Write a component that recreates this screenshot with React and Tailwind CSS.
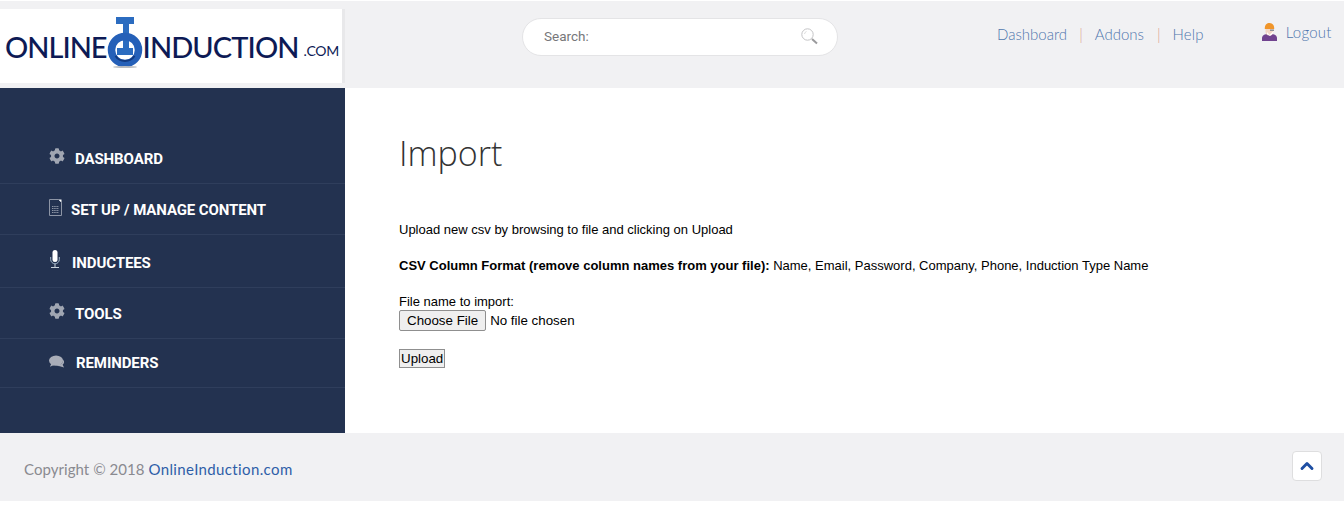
import { FaCog } from 'react-icons/fa'
import { ChevronUp } from 'lucide-react'

function FileIcon() {
  return (
    <svg width="13" height="17" viewBox="0 0 13 17" fill="none" className="text-[#8d95a5]">
      <path d="M.5.5h9l3 3v13H.5z" stroke="currentColor" strokeWidth="1" />
      <path d="M9.5.5h3v3z" fill="#fff" />
      <path d="M3 7.500h7M3 9.500h7M3 11.500h7M3 13.500h7" stroke="currentColor" strokeWidth="1" strokeDasharray="1.500 .7" />
    </svg>
  )
}

function MicIcon() {
  return (
    <svg width="10" height="18" viewBox="0 0 10 18" fill="none">
      <rect x="2.500" y="0" width="5" height="12" rx="2.500" fill="#fff" />
      <path d="M.7 7v2.500a4.300 4.300 0 0 0 8.600 0V7" stroke="#9fb4c8" strokeWidth="1" />
      <path d="M5 14v3M1 17.500h8" stroke="#c9d3dd" strokeWidth="1" />
    </svg>
  )
}

function ChatIcon() {
  return (
    <svg width="17" height="13" viewBox="0 0 17 13">
      <ellipse cx="7.500" cy="5.500" rx="7.500" ry="5.500" fill="#a9adb8" />
      <path d="M2.500 8.500L1 12l5-2z" fill="#a9adb8" />
      <path d="M15 4.500c1.500 2 1.500 4-.5 5.500l1.500 3-4.500-1.500c-1.500 0-2.500-.2-3.500-.7 4 0 7.500-2.800 7-6.300z" fill="#a9adb8" />
    </svg>
  )
}

function SearchIcon() {
  return (
    <svg width="17" height="17" viewBox="0 0 17 17" fill="none">
      <circle cx="6.500" cy="6.500" r="5.700" stroke="#c4c4c6" strokeWidth="1" />
      <path d="M3.500 6a3 3 0 0 1 2-2.500" stroke="#dcdcdd" strokeWidth="1" />
      <path d="M11 11l5 4.500" stroke="#9b9b9d" strokeWidth="2" />
    </svg>
  )
}

function UserIcon() {
  return (
    <svg width="15" height="18" viewBox="0 0 15 18">
      <path d="M0 18v-3c0-2.500 2.500-3.500 4.500-4h6c2 .5 4.500 1.500 4.500 4v3z" fill="#71438f" />
      <path d="M3.500 5h8v3.500a4 4 0 0 1-8 0z" fill="#f3d7c6" />
      <path d="M5 9l2.500 3L12 7.500l-1 3-3 2.500-3-2z" fill="#fff" />
      <path d="M8 6.500h4v1.500H8z" fill="#8c8f98" />
      <path d="M2.800 6C2.500 2 4.800 0 7.500 0s5 2 4.700 6z" fill="#f0952a" />
    </svg>
  )
}

function LogoMark() {
  return (
    <svg width="36" height="51" viewBox="0 0 36 51" className="shrink-0 mb-[7px]">
      <path d="M9 0h18v7h-5v24h4v7H10v-7h6V7H9z" fill="#2b6cc0" />
      <circle cx="18" cy="33" r="13.500" fill="none" stroke="#2560b8" strokeWidth="7.500" />
      <path d="M8.500 39a11.500 11.500 0 0 0 19 0" fill="none" stroke="#123a80" strokeWidth="2" />
      <ellipse cx="18" cy="50" rx="12" ry="1" fill="#b9bcc0" />
    </svg>
  )
}

function SideItem({ icon, label, gap, iconClass = 'justify-center', className }) {
  return (
    <a href="#" className={`flex items-center pl-[49px] border-b border-[#2f3e5c] text-white font-bold text-[15px] tracking-[-0.1px] ${className}`}>
      <span className={`w-4 flex mt-[-4px] ${iconClass}`}>{icon}</span>
      <span className={gap}>{label}</span>
    </a>
  )
}

export default function App() {
  return (
    <div className="font-['Liberation_Sans',sans-serif] bg-white min-h-[505px]">
      <header className="flex h-[88px] bg-[#f1f1f3] border-t border-white">
        <div className="w-[345px] pt-2 shrink-0">
          <div className="h-[74px] bg-white border-r-[3px] border-[#e8e8ea] flex items-center pl-[5px]">
            <span className="font-['Lato',sans-serif] font-medium text-[#0d1a55] text-[29px] tracking-[-1px] leading-none">ONLINE</span>
            <LogoMark />
            <span className="font-['Lato',sans-serif] font-medium text-[#0d1a55] text-[29px] tracking-[-0.9px] leading-none">INDUCTION</span>
            <span className="font-['Lato',sans-serif] text-[#0d1a55] text-[14px] tracking-[-0.2px] leading-none mt-[9px] ml-[5px]">.COM</span>
          </div>
        </div>
        <div className="ml-[177px] mt-[17px] w-[316px] h-[38px] bg-white border border-[#e4e4e6] rounded-full flex items-center justify-between pl-[21px] pr-[19px] shrink-0">
          <span className="text-[13.500px] text-[#77777a] font-['Roboto',sans-serif] mt-[-1px]">Search:</span>
          <span className="mb-[1px]"><SearchIcon /></span>
        </div>
        <nav className="ml-[159px] mt-[23px] h-[20px] flex items-center font-['Lato',sans-serif] font-light text-[15px] text-[#4f76ad] shrink-0">
          <a href="#">Dashboard</a>
          <span className="mx-[12px] text-[#dd9c8c]">|</span>
          <a href="#">Addons</a>
          <span className="ml-[13px] mr-[12px] text-[#dd9c8c]">|</span>
          <a href="#" className="tracking-[0.2px]">Help</a>
        </nav>
        <a href="#" className="ml-[58px] mt-[22px] h-[18px] flex items-center gap-[9px] font-['Lato',sans-serif] font-light text-[15px] tracking-[0.2px] text-[#4f76ad] shrink-0">
          <UserIcon />
          Logout
        </a>
      </header>

      <div className="flex h-[345px]">
        <aside className="w-[345px] bg-[#233250] pt-[45px] shrink-0 font-['Roboto',sans-serif]">
          <SideItem className="h-[51px]" gap="ml-[10px] mt-[2px]" label="DASHBOARD" icon={<FaCog className="text-[#a0a6b2] text-[16px]" />} />
          <SideItem className="h-[51px]" gap="ml-[6px] mt-[2px]" iconClass="justify-start" label="SET UP / MANAGE CONTENT" icon={<FileIcon />} />
          <SideItem className="h-[53px]" gap="ml-[7px] mt-[4px]" iconClass="justify-start pl-[1px]" label="INDUCTEES" icon={<MicIcon />} />
          <SideItem className="h-[51px]" gap="ml-[10px] mt-[2px]" label="TOOLS" icon={<FaCog className="text-[#a0a6b2] text-[16px]" />} />
          <SideItem className="h-[49px]" gap="ml-[11px]" iconClass="justify-start" label="REMINDERS" icon={<ChatIcon />} />
        </aside>
        <main className="pl-[54px] pt-[42px] text-[13px] text-black">
          <h1 className="font-['Open_Sans',sans-serif] font-light text-[34px] leading-[46px] text-[#333]">Import</h1>
          <p className="mt-[45px] leading-[18px]">Upload new csv by browsing to file and clicking on Upload</p>
          <p className="mt-[18px] leading-[18px]">
            <b>CSV Column Format (remove column names from your file):</b> Name, Email, Password, Company, Phone, Induction Type Name
          </p>
          <p className="mt-[18px] leading-[18px]">File name to import:</p>
          <div className="flex items-center h-[21px] mt-[-1px] text-[13.330px]">
            <button className="h-[21px] px-[7px] bg-[#efefef] border border-[#8f8f8f] rounded-[2px] leading-none">Choose File</button>
            <span className="ml-[4px]">No file chosen</span>
          </div>
          <button className="block mt-[18px] h-[19px] px-[1px] text-[13.330px] bg-[#efefef] border border-[#8f8f8f] leading-none">Upload</button>
        </main>
      </div>

      <footer className="h-[68px] bg-[#f1f1f3] flex items-center justify-between pl-[24px] pr-[22px] font-['Lato',sans-serif] text-[15px] text-[#8a8a90]">
        <p className="mt-[4px] tracking-[0.05px]">
          Copyright © 2018 <a href="#" className="text-[#2e5ea8] tracking-[0.37px]">OnlineInduction.com</a>
        </p>
        <a href="#" className="w-[30px] h-[30px] mt-[-3px] bg-white border border-[#dededf] rounded-[4px] flex items-center justify-center text-[#1e4fa3]">
          <ChevronUp size={20} strokeWidth={3.5} />
        </a>
      </footer>
    </div>
  )
}
